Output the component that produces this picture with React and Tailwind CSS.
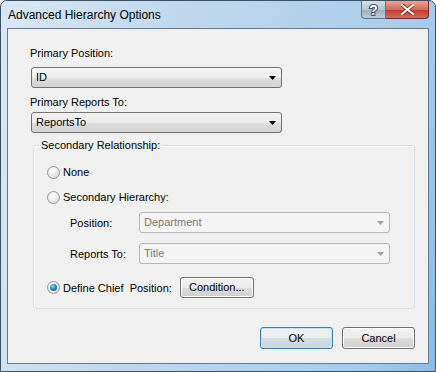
import React from 'react';

const font = { fontFamily: '"Liberation Sans", Arial, sans-serif' };

const Arrow = ({ disabled }) => (
    <svg width="7" height="4" viewBox="0 0 7 4" className="shrink-0">
        <path d="M0 0h7L3.5 4z" fill={disabled ? '#a0a0a0' : '#000'} />
    </svg>
);

const Combo = ({ value, disabled, className = '' }) => (
    <div
        className={`flex items-center h-[21px] rounded-[3px] border pl-[4px] pr-[5px] ${
            disabled
                ? 'border-[#b5b9bc] bg-[#f4f4f4] text-[#7a7a7a]'
                : 'border-[#707070] bg-[linear-gradient(#f3f3f3_0%,#ececec_50%,#dedede_51%,#d3d3d3_100%)] text-black'
        } ${className}`}
    >
        <span className="flex-1 text-[11px] leading-none">{value}</span>
        <Arrow disabled={disabled} />
    </div>
);

const Radio = ({ checked }) => (
    <div className="w-[13px] h-[13px] rounded-full border border-[#979797] bg-[radial-gradient(circle_at_40%_35%,#ffffff_0%,#e6e6e6_55%,#cdcdcd_100%)] flex items-center justify-center shrink-0">
        {checked && (
            <div className="w-[7px] h-[7px] rounded-full bg-[radial-gradient(circle_at_40%_35%,#8fd3f5_0%,#2a8ac4_45%,#0b3f66_100%)]" />
        )}
    </div>
);

const Button = ({ children, className = '', def }) => (
    <div
        className={`flex items-center justify-center rounded-[3px] border text-[11px] ${
            def
                ? 'border-[#3c7fb1] bg-[linear-gradient(#f0f4f7_0%,#e6ecf0_50%,#d5dde3_51%,#cdd6dd_100%)] shadow-[inset_0_0_0_1px_#bfe3f7]'
                : 'border-[#707070] bg-[linear-gradient(#f2f2f2_0%,#ebebeb_50%,#dddddd_51%,#cfcfcf_100%)] shadow-[inset_0_0_0_1px_#fcfcfc]'
        } ${className}`}
    >
        {children}
    </div>
);

export default function App() {
    return (
        <div
            style={font}
            className="w-[436px] h-[372px] rounded-t-[7px] border border-[#3d4f63] bg-[linear-gradient(100deg,#d9e8f5_0%,#c3daef_30%,#b5d2ec_60%,#a9cbe9_85%,#8dbbe3_100%)] flex flex-col text-black"
        >
            <div className="h-[27px] flex items-start pl-[7px] shrink-0">
                <div className="pt-[8px] text-[12px] leading-none text-black">Advanced Hierarchy Options</div>
                <div className="ml-auto flex mr-[6px]">
                    <div className="w-[25px] h-[18px] rounded-bl-[4px] border border-t-0 border-[#5f7185] bg-[linear-gradient(#d5e0ea_0%,#b4c4d3_50%,#9aaec1_51%,#b9cbdb_100%)] flex items-center justify-center text-white text-[14px] font-bold leading-none [-webkit-text-stroke:2px_#3b4b5c] [paint-order:stroke_fill]">
                        ?
                    </div>
                    <div className="w-[43px] h-[18px] rounded-br-[4px] border border-t-0 border-l-0 border-[#6b2a26] bg-[linear-gradient(#e8a69c_0%,#d46b5c_50%,#c0392b_51%,#d66a5a_100%)] flex items-center justify-center">
                        <svg width="13" height="11" viewBox="0 0 13 11">
                            <path d="M1 1l11 9M12 1L1 10" stroke="#5a1c16" strokeWidth="3.6" strokeLinecap="round" />
                            <path d="M1 1l11 9M12 1L1 10" stroke="#fff" strokeWidth="2.2" strokeLinecap="round" />
                        </svg>
                    </div>
                </div>
            </div>
            <div className="mx-[6px] mb-[7px] flex-1 border border-[#5e7a96] bg-[#f0f0f0] flex flex-col pl-[22px] pr-[13px]">
                <div className="mt-[17px] text-[11px] leading-[14px]">Primary Position:</div>
                <Combo value="ID" className="mt-[7px] ml-[1px] w-[251px]" />
                <div className="mt-[7px] text-[11px] leading-[14px]">Primary Reports To:</div>
                <Combo value="ReportsTo" className="mt-[3px] ml-[1px] w-[251px]" />

                <div className="relative mt-[12px] ml-[3px] h-[164px] border border-[#d5dfe5] rounded-[3px] shadow-[inset_1px_1px_0_#fff]">
                    <div className="absolute -top-[8px] left-[5px] px-[2px] bg-[#f0f0f0] text-[11px] leading-[14px]">
                        Secondary Relationship:
                    </div>
                    <div className="flex flex-col pl-[13px] pt-[19px]">
                        <div className="flex items-center gap-[3px]">
                            <Radio />
                            <span className="text-[11px] leading-[14px]">None</span>
                        </div>
                        <div className="flex items-center gap-[3px] mt-[11px]">
                            <Radio />
                            <span className="text-[11px] leading-[14px]">Secondary Hierarchy:</span>
                        </div>
                        <div className="flex items-center mt-[8px] pl-[23px]">
                            <span className="w-[69px] text-[11px] leading-[14px]">Position:</span>
                            <Combo value="Department" disabled className="w-[251px]" />
                        </div>
                        <div className="flex items-center mt-[10px] pl-[23px]">
                            <span className="w-[69px] text-[11px] leading-[14px]">Reports To:</span>
                            <Combo value="Title" disabled className="w-[251px]" />
                        </div>
                        <div className="flex items-center mt-[13px]">
                            <Radio checked />
                            <span className="ml-[3px] text-[11px] leading-[14px]">Define Chief&nbsp; Position:</span>
                            <Button className="ml-[8px] w-[74px] h-[21px]">Condition...</Button>
                        </div>
                    </div>
                </div>

                <div className="flex justify-end gap-[9px] mt-[18px]">
                    <Button def className="w-[73px] h-[22px]">OK</Button>
                    <Button className="w-[73px] h-[22px]">Cancel</Button>
                </div>
            </div>
        </div>
    );
}
